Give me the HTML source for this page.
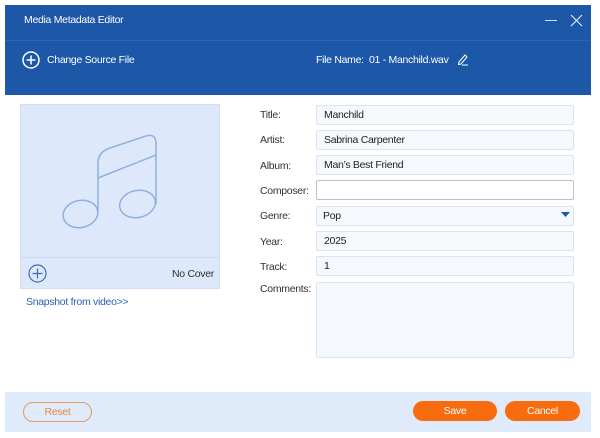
<!DOCTYPE html>
<html><head><style>
body{margin:0;width:600px;height:438px;background:#fff;font-family:"Liberation Sans",sans-serif;position:relative;overflow:hidden;font-size:10.5px;letter-spacing:-0.3px}
.a{position:absolute}
.hdr{left:5px;top:5px;width:586px;height:90px;background:#1c57a8}
.lbl{left:260px;color:#333}
.fld{left:316px;width:258px;height:20px;background:#f5f8fd;border:1px solid #dbe3ee;border-radius:2px;color:#222;line-height:18px;padding-left:7px;box-sizing:border-box}
.btn{border-radius:11px;text-align:center;line-height:20px;height:20px;box-sizing:border-box}
</style></head><body>
<div class="a hdr"></div>
<div class="a" style="left:5px;top:40px;width:586px;height:1px;background:#2c66b6"></div>
<div class="a" style="left:24px;top:14px;color:#fff">Media Metadata Editor</div>
<div class="a" style="left:545px;top:20px;width:12px;height:1px;background:#cfe0f5"></div>
<svg class="a" style="left:570px;top:14px" width="13" height="13"><path d="M1 1L12 12M12 1L1 12" stroke="#dfe9f7" stroke-width="1.2"/></svg>
<svg class="a" style="left:22px;top:51px" width="18" height="18"><circle cx="9" cy="9" r="8" fill="none" stroke="#fff" stroke-width="1.5"/><path d="M9 4.5V13.5M4.5 9H13.5" stroke="#fff" stroke-width="1.5"/></svg>
<div class="a" style="left:47px;top:54px;color:#fff">Change Source File</div>
<div class="a" style="left:316px;top:54px;color:#fff">File Name:&nbsp; 01 - Manchild.wav</div>
<svg class="a" style="left:457px;top:53px" width="12" height="13"><path d="M2 9L8 2L10 4L4 11L1.5 11.5Z" fill="none" stroke="#fff" stroke-width="1"/><path d="M5 12H11" stroke="#fff"/></svg>
<div class="a" style="left:20px;top:104px;width:200px;height:185px;background:#dde9fb;border:1px solid #d0dff3;box-sizing:border-box"></div>
<div class="a" style="left:21px;top:257px;width:198px;height:1px;background:#cbdaf0"></div>
<svg class="a" style="left:0;top:0" width="240" height="240"><g fill="none" stroke="#8fb0de" stroke-width="1.5"><ellipse cx="80.5" cy="214" rx="17.5" ry="13.5" transform="rotate(-12 80.5 214)"/><ellipse cx="137.5" cy="204" rx="18" ry="13.5" transform="rotate(-12 137.5 204)"/><path d="M98 212V163Q98 152 110 148L146 136Q156 133 156 144V204M98 178L156 155"/></g></svg>
<svg class="a" style="left:28px;top:264px" width="19" height="19"><circle cx="9.5" cy="9.5" r="8.5" fill="none" stroke="#3a6db8" stroke-width="1.2"/><path d="M9.5 4.5V14.5M4.5 9.5H14.5" stroke="#3a6db8" stroke-width="1.2"/></svg>
<div class="a" style="left:172px;top:268px;color:#333">No Cover</div>
<div class="a" style="left:26px;top:296px;color:#2a5fae">Snapshot from video&gt;&gt;</div>
<div class="a lbl" style="top:109px">Title:</div>
<div class="a fld" style="top:105px">Manchild</div>
<div class="a lbl" style="top:134px">Artist:</div>
<div class="a fld" style="top:130px">Sabrina Carpenter</div>
<div class="a lbl" style="top:160px">Album:</div>
<div class="a fld" style="top:155px">Man’s Best Friend</div>
<div class="a lbl" style="top:185px">Composer:</div>
<div class="a fld" style="top:180px;background:#fff;border-color:#b8c2d0"></div>
<div class="a lbl" style="top:210px">Genre:</div>
<div class="a fld" style="top:206px;padding-left:6px">Pop</div>
<svg class="a" style="left:561px;top:212px" width="9" height="6"><path d="M0 0H9L4.5 5Z" fill="#1c57a8"/></svg>
<div class="a lbl" style="top:236px">Year:</div>
<div class="a fld" style="top:231px">2025</div>
<div class="a lbl" style="top:261px">Track:</div>
<div class="a fld" style="top:256px">1</div>
<div class="a lbl" style="top:283px">Comments:</div>
<div class="a fld" style="top:282px;height:76px"></div>
<div class="a" style="left:5px;top:392px;width:586px;height:40px;background:#dfebfb"></div>
<div class="a btn" style="left:23px;top:402px;width:69px;border:1px solid #e69a5c;color:#e98a3f;line-height:18px">Reset</div>
<div class="a btn" style="left:413px;top:401px;width:84px;background:#f76c0e;color:#fff">Save</div>
<div class="a btn" style="left:505px;top:401px;width:75px;background:#f76c0e;color:#fff">Cancel</div>
</body></html>
